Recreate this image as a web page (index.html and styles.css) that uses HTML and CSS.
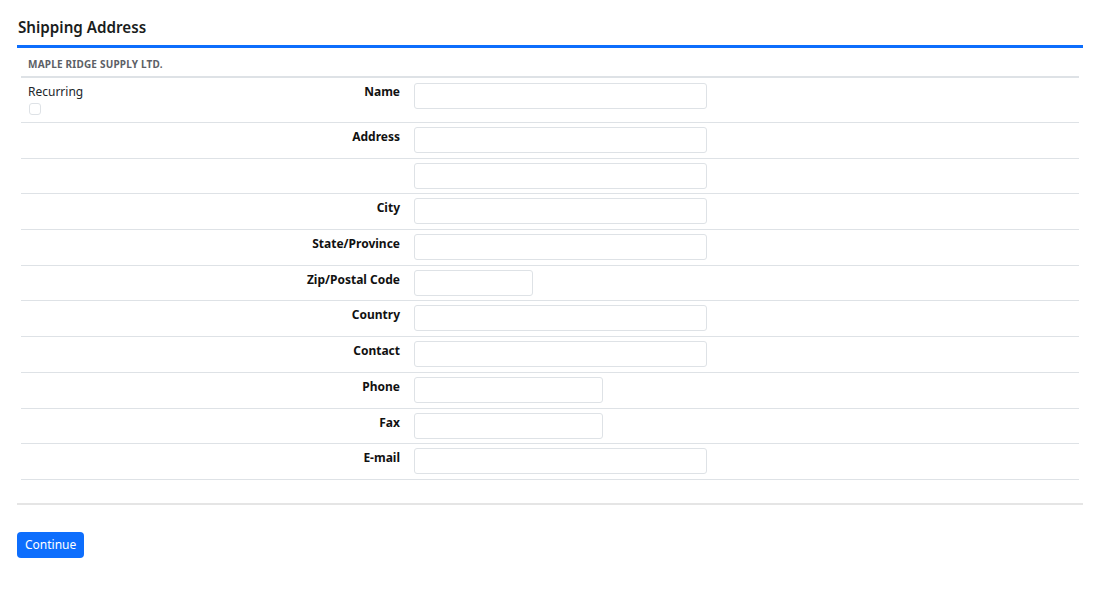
FILE: index.html
```html
<!DOCTYPE html>
<html lang="en">
<head>
    <meta charset="UTF-8">
    <meta name="viewport" content="width=device-width, initial-scale=1.0">
    <title>Shipping Address</title>
    <link rel="stylesheet" href="styles.css">
</head>
<body>
    <div class="container">
        <h2 class="section-title">Shipping Address</h2>
        <div class="panel">
            <div class="company">Maple Ridge Supply Ltd.</div>
            <div class="row first">
                <div class="side">
                    <div>Recurring</div>
                    <input type="checkbox" class="check">
                </div>
                <label class="label">Name</label>
                <div class="field"><input class="form-control" type="text"></div>
            </div>
            <div class="row">
                <div class="side"></div>
                <label class="label">Address</label>
                <div class="field"><input class="form-control" type="text"></div>
            </div>
            <div class="row">
                <div class="side"></div>
                <label class="label"></label>
                <div class="field"><input class="form-control" type="text"></div>
            </div>
            <div class="row">
                <div class="side"></div>
                <label class="label">City</label>
                <div class="field"><input class="form-control" type="text"></div>
            </div>
            <div class="row">
                <div class="side"></div>
                <label class="label">State/Province</label>
                <div class="field"><input class="form-control" type="text"></div>
            </div>
            <div class="row">
                <div class="side"></div>
                <label class="label">Zip/Postal Code</label>
                <div class="field"><input class="form-control small" type="text"></div>
            </div>
            <div class="row">
                <div class="side"></div>
                <label class="label">Country</label>
                <div class="field"><input class="form-control" type="text"></div>
            </div>
            <div class="row">
                <div class="side"></div>
                <label class="label">Contact</label>
                <div class="field"><input class="form-control" type="text"></div>
            </div>
            <div class="row">
                <div class="side"></div>
                <label class="label">Phone</label>
                <div class="field"><input class="form-control medium" type="text"></div>
            </div>
            <div class="row">
                <div class="side"></div>
                <label class="label">Fax</label>
                <div class="field"><input class="form-control medium" type="text"></div>
            </div>
            <div class="row">
                <div class="side"></div>
                <label class="label">E-mail</label>
                <div class="field"><input class="form-control" type="text"></div>
            </div>
        </div>
        <button class="btn-primary">Continue</button>
    </div>
</body>
</html>
```

FILE: styles.css
```css
body {
    font-family: "Noto Sans", "Open Sans", sans-serif;
    margin: 0;
    padding: 0;
    background-color: #ffffff;
    color: #111111;
    font-size: 12px;
}
.container {
    padding: 0 17px;
}
.section-title {
    margin: 0;
    padding: 17px 1px 8px;
    font-size: 15.2px;
    font-weight: 600;
    line-height: 20px;
    color: #1a1d20;
    border-bottom: 3px solid #0d6efd;
}
.panel {
    padding: 0 4px 23px;
    border-bottom: 2px solid #e5e5e5;
}
.company {
    padding: 9px 7px 5px;
    font-size: 10px;
    font-weight: 700;
    line-height: 14px;
    letter-spacing: 0.2px;
    text-transform: uppercase;
    color: #5c6066;
    border-bottom: 2px solid #dee2e6;
}
.row {
    display: grid;
    grid-template-columns: 186px 200px 1fr;
    border-bottom: 1px solid #dee2e6;
}
.side {
    padding: 5px 7px 7px;
    font-size: 12px;
    line-height: 18px;
    color: #212529;
}
.check {
    display: block;
    width: 12px;
    height: 12px;
    margin: 2px 0 0 1px;
    appearance: none;
    border: 1px solid #dee2e6;
    border-radius: 3px;
    background: #fff;
}
.label {
    padding: 5px 7px 0 0;
    text-align: right;
    font-weight: 700;
    line-height: 18px;
}
.field {
    padding: 4px 7px 4.7px;
}
.row.first .field {
    padding-top: 5px;
}
.form-control {
    display: block;
    box-sizing: border-box;
    width: 293px;
    height: 26px;
    padding: 3px 6px;
    border: 1px solid #dee2e6;
    border-radius: 3px;
    background-color: #ffffff;
    font-family: inherit;
    font-size: 12px;
}
.form-control.small {
    width: 119px;
}
.form-control.medium {
    width: 189px;
}
.btn-primary {
    margin-top: 27px;
    padding: 4px 8px;
    border: none;
    border-radius: 4px;
    background-color: #0d6efd;
    color: #ffffff;
    font-family: inherit;
    font-size: 12px;
    line-height: 18px;
    cursor: pointer;
}
```
